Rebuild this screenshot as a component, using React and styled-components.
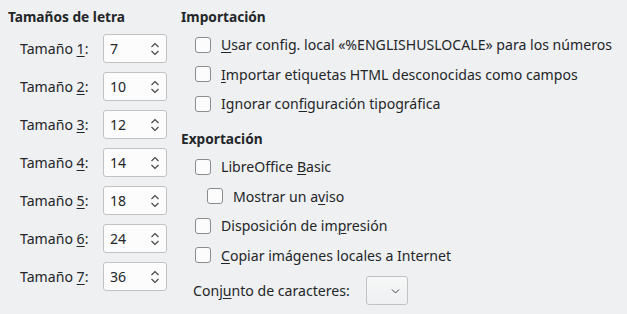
import React from "react";
import styled, { createGlobalStyle } from "styled-components";

const Global = createGlobalStyle`
  html, body {
    margin: 0;
    padding: 0;
    background: #eff0f1;
  }
  body {
    width: 627px;
    height: 314px;
    overflow: hidden;
    font-family: "Noto Sans", "Open Sans", sans-serif;
    font-size: 14.1px;
    color: #232629;
  }
`;

const Page = styled.div`
  display: flex;
  padding: 8px 0 0 8px;
  box-sizing: border-box;
  height: 314px;
`;

const SizesColumn = styled.div`
  width: 173px;
  display: flex;
  flex-direction: column;
`;

const OptionsColumn = styled.div`
  flex: 1;
  display: flex;
  flex-direction: column;
`;

const Heading = styled.div`
  font-weight: bold;
  font-size: 13.7px;
  height: 18px;
  line-height: 18px;
  flex-shrink: 0;
  margin-top: ${(p) => p.$top || 0}px;
  margin-bottom: ${(p) => p.$bottom || 0}px;
`;

// Font size rows ----------------------------------------------------------

const SizeList = styled.div`
  display: flex;
  flex-direction: column;
  gap: 9px;
  margin-top: 8px;
  padding-left: 12px;
`;

const SizeRow = styled.div`
  display: flex;
  align-items: center;
  height: 29px;
  flex-shrink: 0;
`;

const SizeLabel = styled.label`
  width: 83px;
`;

const Mnemonic = styled.u`
  text-decoration-thickness: 1px;
  text-underline-offset: 2px;
`;

const SpinBox = styled.div`
  width: 64px;
  height: 29px;
  box-sizing: border-box;
  border: 1px solid #c0c2c4;
  border-radius: 3px;
  background: #fcfcfc;
  display: flex;
  align-items: center;
  padding-left: 6px;
`;

const SpinValue = styled.span`
  flex: 1;
`;

const SpinArrows = styled.svg`
  width: 10px;
  height: 16px;
  margin-right: 6px;
`;

const SizeSpin = ({ value }) => (
  <SpinBox>
    <SpinValue>{value}</SpinValue>
    <SpinArrows viewBox="0 0 10 16">
      <path d="M1.5 6 L5 2.5 L8.5 6" fill="none" stroke="#3f4144" strokeWidth="1.1" />
      <path d="M1.5 10 L5 13.5 L8.5 10" fill="none" stroke="#3f4144" strokeWidth="1.1" />
    </SpinArrows>
  </SpinBox>
);

// Check rows --------------------------------------------------------------

const CheckList = styled.div`
  display: flex;
  flex-direction: column;
  flex-shrink: 0;
  padding-left: 14px;
`;

const CheckRow = styled.label`
  display: flex;
  align-items: center;
  height: 29.6px;
  flex-shrink: 0;
  gap: 10px;
  padding-left: ${(p) => (p.$sub ? 12 : 0)}px;
`;

const Box = styled.span`
  width: 16px;
  height: 16px;
  box-sizing: border-box;
  border: 1px solid #8a8c8e;
  border-radius: 3px;
  background: #fcfcfc;
  flex-shrink: 0;
`;

const Check = ({ sub, children }) => (
  <CheckRow $sub={sub}>
    <Box />
    <span>{children}</span>
  </CheckRow>
);

const CharsetRow = styled.div`
  display: flex;
  align-items: center;
  gap: 16px;
  margin-top: 6px;
  padding-left: 12px;
  height: 29px;
  flex-shrink: 0;
`;

const Combo = styled.div`
  width: 42px;
  height: 29px;
  box-sizing: border-box;
  border: 1px solid #c0c2c4;
  border-radius: 3px;
  background: linear-gradient(#f6f7f7, #eff0f1);
  display: flex;
  align-items: center;
  justify-content: flex-end;
  padding-right: 7px;
`;

const sizes = [7, 10, 12, 14, 18, 24, 36];

export default function App() {
  return (
    <>
      <Global />
      <Page>
        <SizesColumn>
          <Heading>Tamaños de letra</Heading>
          <SizeList>
            {sizes.map((s, i) => (
              <SizeRow key={i}>
                <SizeLabel>
                  Tamaño <Mnemonic>{i + 1}</Mnemonic>:
                </SizeLabel>
                <SizeSpin value={s} />
              </SizeRow>
            ))}
          </SizeList>
        </SizesColumn>
        <OptionsColumn>
          <Heading $bottom={4}>Importación</Heading>
          <CheckList>
            <Check>
              <Mnemonic>U</Mnemonic>sar config. local «%ENGLISHUSLOCALE» para los números
            </Check>
            <Check>
              <Mnemonic>I</Mnemonic>mportar etiquetas HTML desconocidas como campos
            </Check>
            <Check>
              Ignorar con<Mnemonic>f</Mnemonic>iguración tipográfica
            </Check>
          </CheckList>
          <Heading $top={11} $bottom={4}>Exportación</Heading>
          <CheckList>
            <Check>
              LibreOffice <Mnemonic>B</Mnemonic>asic
            </Check>
            <Check sub>
              Mostrar un a<Mnemonic>v</Mnemonic>iso
            </Check>
            <Check>
              Disposición de im<Mnemonic>p</Mnemonic>resión
            </Check>
            <Check>
              <Mnemonic>C</Mnemonic>opiar imágenes locales a Internet
            </Check>
          </CheckList>
          <CharsetRow>
            <span>
              Conj<Mnemonic>u</Mnemonic>nto de caracteres:
            </span>
            <Combo>
              <svg width="9" height="6" viewBox="0 0 9 6">
                <path d="M1 1.5 L4.5 5 L8 1.5" fill="none" stroke="#3f4144" strokeWidth="1" />
              </svg>
            </Combo>
          </CharsetRow>
        </OptionsColumn>
      </Page>
    </>
  );
}
